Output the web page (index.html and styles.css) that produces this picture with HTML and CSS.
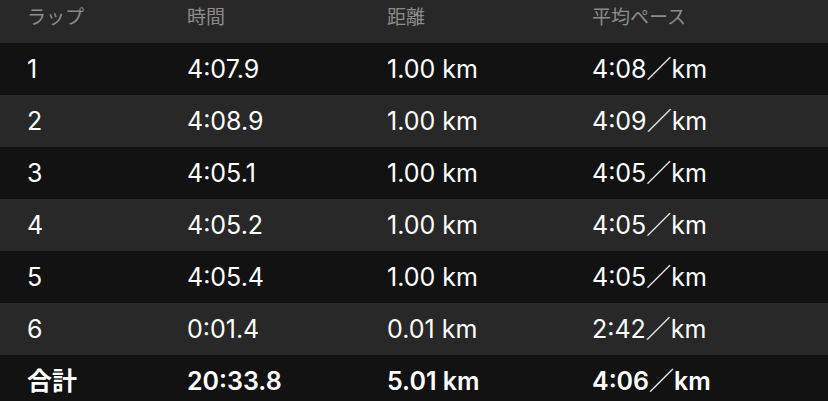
FILE: index.html
```html
<!DOCTYPE html>
<html lang="ja">
<head>
<meta charset="utf-8">
<link rel="stylesheet" href="styles.css">
</head>
<body>
<div class="table">
  <div class="row head"><span>ラップ</span><span>時間</span><span>距離</span><span>平均ペース</span></div>
  <div class="row dark"><span>1</span><span>4:07.9</span><span>1.00 km</span><span>4:08／km</span></div>
  <div class="row light"><span>2</span><span>4:08.9</span><span>1.00 km</span><span>4:09／km</span></div>
  <div class="row dark"><span>3</span><span>4:05.1</span><span>1.00 km</span><span>4:05／km</span></div>
  <div class="row light"><span>4</span><span>4:05.2</span><span>1.00 km</span><span>4:05／km</span></div>
  <div class="row dark"><span>5</span><span>4:05.4</span><span>1.00 km</span><span>4:05／km</span></div>
  <div class="row light"><span>6</span><span>0:01.4</span><span>0.01 km</span><span>2:42／km</span></div>
  <div class="row dark total"><span>合計</span><span>20:33.8</span><span>5.01 km</span><span>4:06／km</span></div>
</div>
</body>
</html>
```
FILE: styles.css
```css
html, body {
  margin: 0;
  padding: 0;
  background: #121212;
  overflow: hidden;
  height: 401px;
}
.table {
  display: flex;
  flex-direction: column;
  font-family: Inter, "Noto Sans CJK JP", sans-serif;
  color: #ffffff;
}
.row {
  display: grid;
  grid-template-columns: 160px 200px 205px 1fr;
  padding-left: 27px;
  height: 52px;
  align-items: center;
  font-size: 25px;
  line-height: 1;
}
.head {
  height: 43px;
  align-items: start;
  padding-top: 8px;
  box-sizing: border-box;
  background: #282828;
  color: #8c8c8c;
  font-size: 19px;
}
.dark { background: #121212; }
.light { background: #282828; }
.total { font-weight: 600; }
```
